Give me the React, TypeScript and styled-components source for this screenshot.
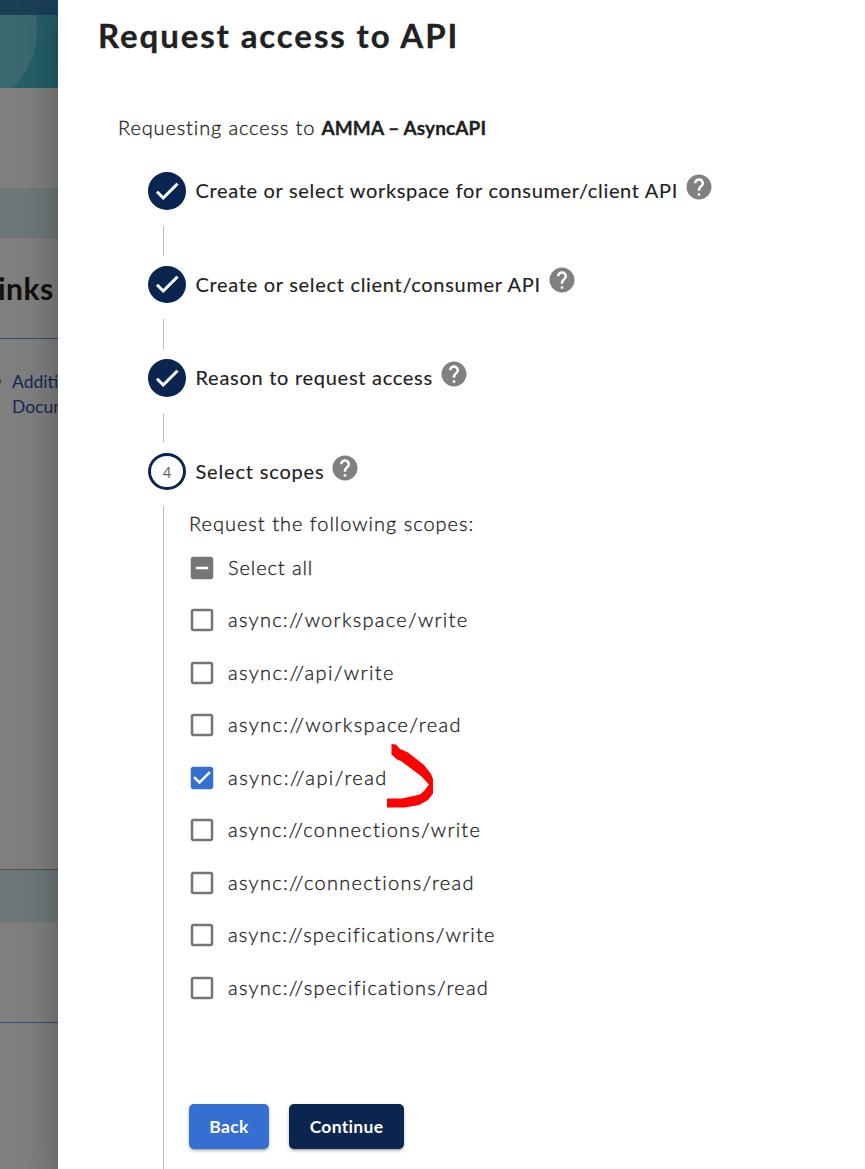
import React from "react";
import styled, { createGlobalStyle } from "styled-components";

const GlobalStyle = createGlobalStyle`
  * { box-sizing: border-box; }
  body {
    margin: 0;
    overflow: hidden;
    background: #fff;
    font-family: Lato, "Liberation Sans", sans-serif;
    color: #212121;
  }
`;

const Shell = styled.div`
  display: flex;
  width: 865px;
  height: 1169px;
  overflow: hidden;
`;

const PageBehind = styled.div`
  position: relative;
  width: 58px;
  flex: none;
  overflow: hidden;
  background: #fff;
  &::after {
    content: "";
    position: absolute;
    inset: 0;
    background: rgba(0, 0, 0, 0.5);
  }
`;

const TopBar = styled.div`
  height: 15px;
  background: #347fae;
`;

const Banner = styled.svg`
  display: block;
  width: 58px;
  height: 73px;
`;

const Space = styled.div<{ $h: number }>`
  height: ${(p) => p.$h}px;
`;

const Band = styled.div<{ $h: number; $top?: string }>`
  height: ${(p) => p.$h}px;
  background: #def0f2;
  border-top: ${(p) => (p.$top ? `1px solid ${p.$top}` : "none")};
  border-bottom: 1px solid #d4e6e8;
`;

const LinksHeading = styled.h2`
  height: 101px;
  margin: 0;
  padding-top: 30px;
  font-size: 30px;
  line-height: 40px;
  font-weight: 700;
  letter-spacing: 0.5px;
  text-indent: -2px;
  white-space: nowrap;
  border-bottom: 1px solid #6f96e0;
`;

const LinksBody = styled.div`
  display: flex;
  height: 530px;
  padding-top: 30px;
`;

const Bullet = styled.span`
  flex: none;
  width: 12px;
  &::before {
    content: "";
    display: block;
    width: 5px;
    height: 5px;
    margin: 10px 0 0 -4px;
    border-radius: 50%;
    background: #777;
  }
`;

const SideLink = styled.a`
  font-size: 17.5px;
  line-height: 25px;
  color: #2c50a5;
`;

const Rule = styled.div`
  height: 101px;
  border-bottom: 1px solid #6f96e0;
`;

const Drawer = styled.main`
  position: relative;
  flex: 1;
  padding: 11px 40px 0;
  background: #fff;
  box-shadow: 0 10px 12px -6px rgba(0, 0, 0, 0.2), 0 20px 30px 2px rgba(0, 0, 0, 0.14),
    0 8px 38px 6px rgba(0, 0, 0, 0.12);
`;

const Title = styled.h1`
  margin: 0;
  font-size: 33px;
  line-height: 48px;
  font-weight: 700;
  letter-spacing: 1.9px;
  -webkit-text-stroke: 0.3px #212121;
`;

const Intro = styled.p`
  margin: 52px 0 0 20px;
  font-size: 20px;
  line-height: 32px;
  font-weight: 300;
  letter-spacing: 0.87px;
  -webkit-text-stroke: 0.3px #212121;
  strong {
    font-size: 19px;
    font-weight: 700;
    letter-spacing: 0.1px;
  }
`;

const Stepper = styled.div`
  margin: 28px 0 0 50px;
`;

const StepRow = styled.div`
  display: flex;
  align-items: center;
  height: 37.5px;
`;

const StepDot = styled.span<{ $active?: boolean }>`
  display: flex;
  align-items: center;
  justify-content: center;
  width: 38px;
  height: 37.5px;
  margin-right: 9.5px;
  border-radius: 50%;
  border: 3px solid #0a2550;
  background: ${(p) => (p.$active ? "#fff" : "#0a2550")};
  color: #666;
  font-size: 15px;
`;

const StepLabel = styled.span<{ $ls: number }>`
  padding-bottom: 1.5px;
  font-size: 20px;
  line-height: 30px;
  font-weight: 400;
  letter-spacing: ${(p) => p.$ls}px;
  -webkit-text-stroke: 0.12px #212121;
  white-space: nowrap;
`;

const HelpSvg = styled.svg`
  width: 30px;
  height: 30px;
  margin: -8px 0 0 6px;
  fill: #808080;
`;

const Connector = styled.div`
  height: 30px;
  margin: 16px 0 10.1px 15px;
  border-left: 1px solid #bdbdbd;
`;

const StepContent = styled.section`
  height: 680px;
  margin: 16px 0 0 15px;
  padding: 2px 0 0 25px;
  border-left: 1px solid #bdbdbd;
`;

const ScopesTitle = styled.p`
  margin: 0;
  font-size: 20px;
  line-height: 30px;
  font-weight: 300;
  letter-spacing: 1px;
  -webkit-text-stroke: 0.3px #212121;
`;

const ScopeList = styled.div`
  margin-top: 3px;
`;

const Scope = styled.label`
  display: flex;
  align-items: center;
  height: 52.5px;
  margin-left: -2px;
`;

const BoxSvg = styled.svg`
  width: 30px;
  height: 30px;
  margin-right: 11px;
`;

const ScopeText = styled.span<{ $ls: number }>`
  position: relative;
  padding-bottom: 2px;
  font-size: 20px;
  line-height: 30px;
  font-weight: 300;
  letter-spacing: ${(p) => p.$ls}px;
  -webkit-text-stroke: 0.3px #212121;
`;

const RedMark = styled.svg`
  position: absolute;
  left: 154px;
  top: -22px;
  width: 56px;
  height: 70px;
`;

const Actions = styled.div`
  display: flex;
  gap: 20px;
  margin-top: 90px;
`;

const Button = styled.button<{ $w: number; $bg: string }>`
  width: ${(p) => p.$w}px;
  height: 45px;
  padding: 0;
  border: 0;
  border-radius: 5px;
  background: ${(p) => p.$bg};
  color: #fff;
  font-family: inherit;
  font-size: 17.5px;
  font-weight: 700;
  letter-spacing: 0.3px;
  box-shadow: 0 3px 2px -2px rgba(0, 0, 0, 0.2), 0 2px 3px rgba(0, 0, 0, 0.14),
    0 1px 5px rgba(0, 0, 0, 0.12);
`;

const TickSvg = styled.svg`
  flex: none;
  width: 30px;
  height: 30px;
`;

const Help = () => (
  <HelpSvg viewBox="0 0 24 24">
    <path d="M12 2C6.48 2 2 6.48 2 12s4.48 10 10 10 10-4.48 10-10S17.52 2 12 2zm1 17h-2v-2h2v2zm2.07-7.75l-.9.92C13.45 12.9 13 13.5 13 15h-2v-.5c0-1.1.45-2.1 1.17-2.83l1.24-1.26c.37-.36.59-.86.59-1.41 0-1.1-.9-2-2-2s-2 .9-2 2H8c0-2.21 1.79-4 4-4s4 1.79 4 4c0 .88-.36 1.68-.93 2.25z" />
  </HelpSvg>
);

const Tick = () => (
  <TickSvg viewBox="0 0 24 24" fill="#fff">
    <path d="M9 16.17L4.83 12l-1.42 1.41L9 19 21 7l-1.41-1.41z" stroke="#fff" strokeWidth=".5" />
  </TickSvg>
);

type BoxState = "off" | "on" | "mixed";

const boxPaths: Record<BoxState, string> = {
  off: "M19 5v14H5V5h14m0-2H5c-1.1 0-2 .9-2 2v14c0 1.1.9 2 2 2h14c1.1 0 2-.9 2-2V5c0-1.1-.9-2-2-2z",
  on: "M19 3H5c-1.11 0-2 .9-2 2v14c0 1.1.89 2 2 2h14c1.11 0 2-.9 2-2V5c0-1.1-.89-2-2-2zm-9 14l-5-5 1.41-1.41L10 14.17l7.59-7.59L19 8l-9 9z",
  mixed: "M19 3H5c-1.1 0-2 .9-2 2v14c0 1.1.9 2 2 2h14c1.1 0 2-.9 2-2V5c0-1.1-.9-2-2-2zm-2 10H7v-2h10v2z",
};

const Box = ({ state }: { state: BoxState }) => (
  <BoxSvg viewBox="0 0 24 24" fill={state === "on" ? "#346fd1" : "#757575"}>
    <path d={boxPaths[state]} />
  </BoxSvg>
);

const doneSteps = [
  { label: "Create or select workspace for consumer/client API", ls: 0.68 },
  { label: "Create or select client/consumer API", ls: 0.7 },
  { label: "Reason to request access", ls: 0.72 },
];

const scopes: { name: string; state: BoxState; ls: number }[] = [
  { name: "Select all", state: "mixed", ls: 0.9 },
  { name: "async://workspace/write", state: "off", ls: 1.28 },
  { name: "async://api/write", state: "off", ls: 1.36 },
  { name: "async://workspace/read", state: "off", ls: 1.36 },
  { name: "async://api/read", state: "on", ls: 1.45 },
  { name: "async://connections/write", state: "off", ls: 1.22 },
  { name: "async://connections/read", state: "off", ls: 1.3 },
  { name: "async://specifications/write", state: "off", ls: 1.18 },
  { name: "async://specifications/read", state: "off", ls: 1.24 },
];

export default function App() {
  return (
    <Shell>
      <GlobalStyle />
      <PageBehind>
        <TopBar />
        <Banner viewBox="0 0 58 73">
          <rect width="58" height="73" fill="#4abfd1" />
          <path d="M0 0H36C40 28 32 53 13 73H0Z" fill="#74d5de" />
        </Banner>
        <Space $h={100} />
        <Band $h={50} />
        <LinksHeading>inks</LinksHeading>
        <LinksBody>
          <Bullet />
          <SideLink>Additional Documentation</SideLink>
        </LinksBody>
        <Band $h={53} $top="#8fa5a8" />
        <Rule />
      </PageBehind>
      <Drawer>
        <Title>Request access to API</Title>
        <Intro>
          Requesting access to <strong>AMMA – AsyncAPI</strong>
        </Intro>
        <Stepper>
          {doneSteps.map((s) => (
            <React.Fragment key={s.label}>
              <StepRow>
                <StepDot>
                  <Tick />
                </StepDot>
                <StepLabel $ls={s.ls}>{s.label}</StepLabel>
                <Help />
              </StepRow>
              <Connector />
            </React.Fragment>
          ))}
          <StepRow>
            <StepDot $active>4</StepDot>
            <StepLabel $ls={0.82}>Select scopes</StepLabel>
            <Help />
          </StepRow>
          <StepContent>
            <ScopesTitle>Request the following scopes:</ScopesTitle>
            <ScopeList>
              {scopes.map((s) => (
                <Scope key={s.name}>
                  <Box state={s.state} />
                  <ScopeText $ls={s.ls}>
                    {s.name}
                    {s.state === "on" && (
                      <RedMark viewBox="0 0 56 70">
                        <path
                          fill="#f00"
                          d="M9.5 4L14 4.5L18 9L26 12.5L35 19.5L42 25L49 34L51 39V53.5L46 60L37 65L23 67.5H5V58.5H20L38 54.5L42 51L47 44.5L39 36L29 28.5L19 21L15 19.5L9.5 14.5Z"
                        />
                      </RedMark>
                    )}
                  </ScopeText>
                </Scope>
              ))}
            </ScopeList>
            <Actions>
              <Button $w={80} $bg="#346fd1">Back</Button>
              <Button $w={115} $bg="#0a2550">Continue</Button>
            </Actions>
          </StepContent>
        </Stepper>
      </Drawer>
    </Shell>
  );
}
